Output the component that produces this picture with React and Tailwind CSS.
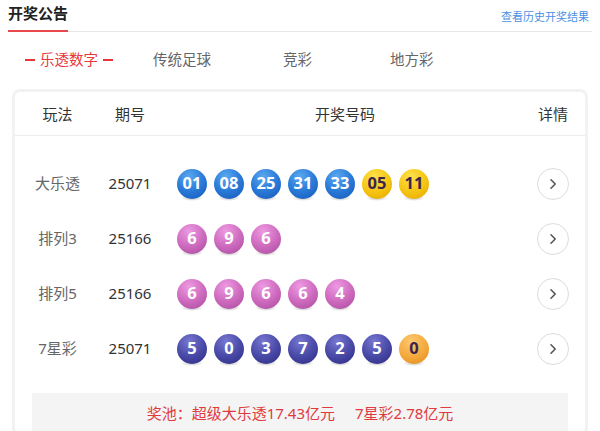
import React from "react";

const F = { fontFamily: '"Noto Sans", "Noto Sans CJK SC", sans-serif' };

const styles = {
  blue: "bg-[radial-gradient(circle_at_40%_25%,#5aa8f0_0%,#2a7ad8_50%,#1458b8_100%)] text-white",
  yellow: "bg-[radial-gradient(circle_at_40%_25%,#fde24a_0%,#f5c312_55%,#e4a500_100%)] text-[#3b2350]",
  pink: "bg-[radial-gradient(circle_at_40%_25%,#ee9ae2_0%,#cf6cc0_50%,#a8489c_100%)] text-white",
  navy: "bg-[radial-gradient(circle_at_40%_25%,#7878d2_0%,#4a4aa8_50%,#2c2c82_100%)] text-white",
  orange: "bg-[radial-gradient(circle_at_40%_25%,#fcc870_0%,#f4a83c_55%,#e08a18_100%)] text-[#3b2350]",
};

function Ball({ n, c }) {
  return (
    <div className="relative w-[30px] h-[30px] shrink-0">
      <div className="absolute left-[4px] right-[4px] top-[26px] h-[6px] rounded-[50%] bg-[radial-gradient(ellipse_at_center,rgba(0,0,0,0.28)_0%,rgba(0,0,0,0)_70%)]" />
      <div className={`relative w-[30px] h-[30px] rounded-full flex items-center justify-center text-[16.5px] font-bold leading-none ${styles[c]}`}>
        {n}
      </div>
    </div>
  );
}

function Arrow() {
  return (
    <div className="w-[32px] h-[32px] rounded-full border border-[#dcdcdc] flex items-center justify-center bg-white">
      <svg width="12" height="12" viewBox="0 0 12 12">
        <path d="M4 1.8 L8.2 6 L4 10.2" fill="none" stroke="#555" strokeWidth="1.6" strokeLinecap="round" strokeLinejoin="round" />
      </svg>
    </div>
  );
}

const rows = [
  { name: "大乐透", issue: "25071", balls: [["01", "blue"], ["08", "blue"], ["25", "blue"], ["31", "blue"], ["33", "blue"], ["05", "yellow"], ["11", "yellow"]] },
  { name: "排列3", issue: "25166", balls: [["6", "pink"], ["9", "pink"], ["6", "pink"]] },
  { name: "排列5", issue: "25166", balls: [["6", "pink"], ["9", "pink"], ["6", "pink"], ["6", "pink"], ["4", "pink"]] },
  { name: "7星彩", issue: "25071", balls: [["5", "navy"], ["0", "navy"], ["3", "navy"], ["7", "navy"], ["2", "navy"], ["5", "navy"], ["0", "orange"]] },
];

export default function App() {
  return (
    <div className="w-[600px] h-[431px] overflow-hidden bg-white" style={F}>
      <div className="px-[8px] pt-[3px]">
        <div className="flex items-end justify-between h-[29px] border-b border-[#e6e6e6] relative">
          <div className="relative h-full flex items-start">
            <span className="text-[15px] font-bold text-[#222] leading-[20px]">开奖公告</span>
            <div className="absolute left-0 bottom-[-1px] w-[60px] h-[2px] bg-[#e8484c]" />
          </div>
          <span className="text-[11px] text-[#4a90e2] leading-none mb-[9px] mr-[3px]">查看历史开奖结果</span>
        </div>
      </div>
      <div className="flex items-center h-[56px] text-[14.5px] text-[#666]">
        <div className="flex items-center ml-[25px] w-[128px] text-[#e8383d]">
          <div className="w-[10px] h-[2px] bg-[#e8383d]" />
          <span className="mx-[5px]">乐透数字</span>
          <div className="w-[10px] h-[2px] bg-[#e8383d]" />
        </div>
        <span className="w-[130px]">传统足球</span>
        <span className="w-[107px]">竞彩</span>
        <span>地方彩</span>
      </div>
      <div className="mx-[12px] mt-[1px] border-[3px] border-[#f2f2f2] rounded-[8px] bg-white">
        <div className="flex items-center h-[44px] pt-[2px] border-b border-[#ececec] text-[15px] text-[#333]">
          <div className="w-[85px] text-center">玩法</div>
          <div className="w-[60px] text-center">期号</div>
          <div className="w-[370px] text-center">开奖号码</div>
          <div className="w-[46px] text-center">详情</div>
        </div>
        <div className="pt-[20px]">
          {rows.map((r) => (
            <div key={r.name} className="flex items-center h-[55px]">
              <div className="w-[85px] text-center text-[15px] text-[#666]">{r.name}</div>
              <div className="w-[60px] text-center text-[15px] text-[#333]">{r.issue}</div>
              <div className="w-[370px] flex items-center gap-[7px] pl-[17px]">
                {r.balls.map((b, i) => (
                  <Ball key={i} n={b[0]} c={b[1]} />
                ))}
              </div>
              <div className="w-[46px] flex justify-center">
                <Arrow />
              </div>
            </div>
          ))}
        </div>
        <div className="mx-[17px] mt-[17px] h-[40px] bg-[#f4f4f4] flex items-center justify-center text-[15px] text-[#e03a3e]">
          奖池：超级大乐透17.43亿元<span className="ml-[20px]">7星彩2.78亿元</span>
        </div>
      </div>
    </div>
  );
}
